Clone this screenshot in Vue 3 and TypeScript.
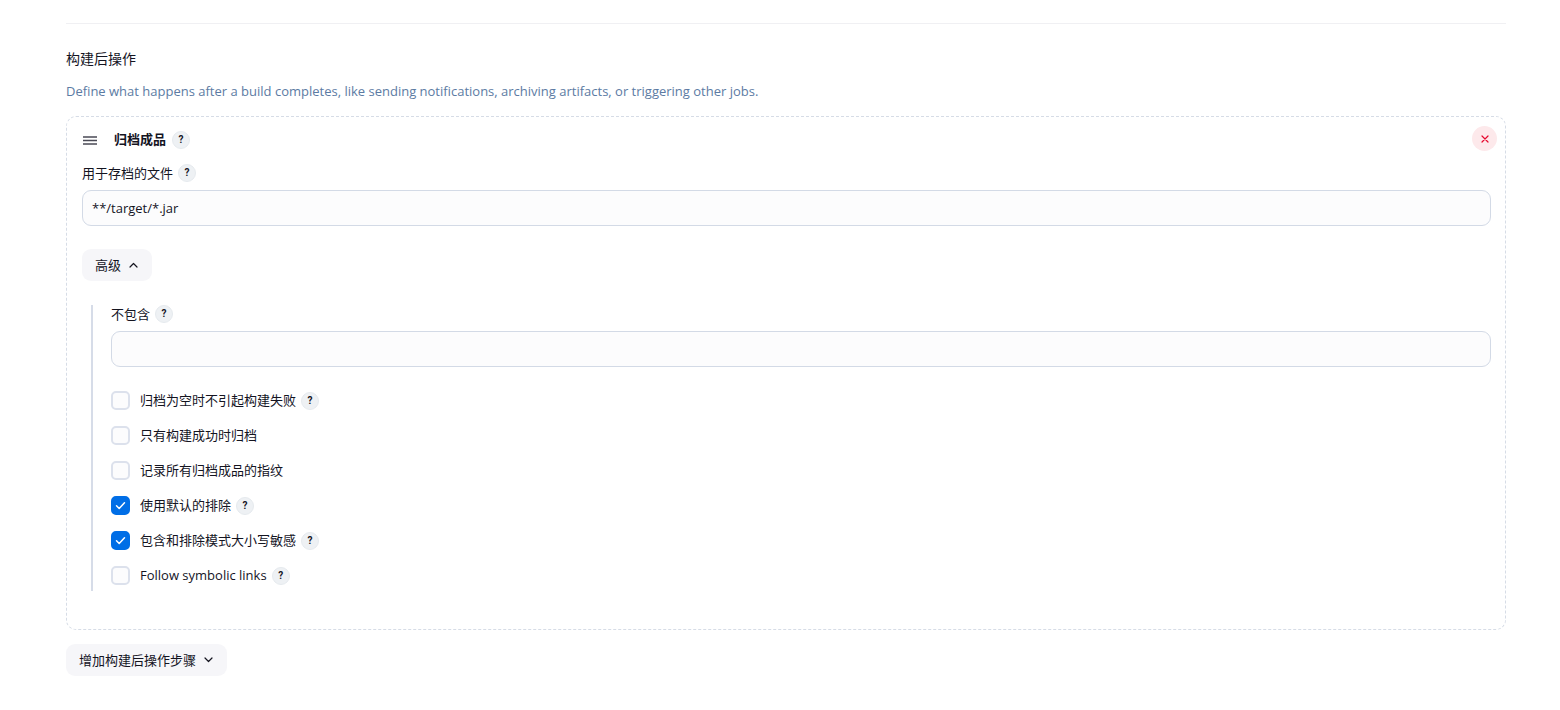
<script setup lang="ts">
import { ref } from 'vue'

interface Option {
  id: string
  label: string
  checked: boolean
  help: boolean
}

const files = ref('**/target/*.jar')
const excludes = ref('')
const expanded = ref(true)
const options = ref<Option[]>([
  { id: 'allow-empty', label: '归档为空时不引起构建失败', checked: false, help: true },
  { id: 'only-success', label: '只有构建成功时归档', checked: false, help: false },
  { id: 'fingerprint', label: '记录所有归档成品的指纹', checked: false, help: false },
  { id: 'default-excludes', label: '使用默认的排除', checked: true, help: true },
  { id: 'case-sensitive', label: '包含和排除模式大小写敏感', checked: true, help: true },
  { id: 'symlinks', label: 'Follow symbolic links', checked: false, help: true },
])
</script>

<template>
  <main class="page">
    <hr class="divider" />
    <h2 class="heading">构建后操作</h2>
    <p class="description">
      Define what happens after a build completes, like sending notifications, archiving artifacts, or triggering other jobs.
    </p>

    <section class="card">
      <header class="card-header">
        <svg class="handle" viewBox="0 0 14 9" aria-hidden="true">
          <path d="M0 1h14M0 4.5h14M0 8h14" fill="none" stroke="currentColor" stroke-width="1.4" />
        </svg>
        <h3 class="card-title">归档成品</h3>
        <button type="button" class="help">?</button>
        <button type="button" class="remove">
          <svg viewBox="0 0 8 8" aria-hidden="true">
            <path d="M1 1l6 6M7 1l-6 6" fill="none" stroke="currentColor" stroke-width="1.2" stroke-linecap="round" />
          </svg>
        </button>
      </header>

      <div class="field-label">
        <label for="files">用于存档的文件</label>
        <button type="button" class="help">?</button>
      </div>
      <input id="files" v-model="files" class="text-input" type="text" />

      <button type="button" class="button advanced" @click="expanded = !expanded">
        高级
        <svg class="chevron" viewBox="0 0 9 6" aria-hidden="true">
          <path d="M1 5l3.500-3.500L8 5" fill="none" stroke="currentColor" stroke-width="1.2" stroke-linecap="round" stroke-linejoin="round" />
        </svg>
      </button>

      <div v-if="expanded" class="nested">
        <div class="field-label">
          <label for="excludes">不包含</label>
          <button type="button" class="help">?</button>
        </div>
        <input id="excludes" v-model="excludes" class="text-input" type="text" />

        <div class="options">
          <div v-for="option in options" :key="option.id" class="option">
            <span class="check">
              <input :id="option.id" v-model="option.checked" type="checkbox" />
              <svg v-if="option.checked" viewBox="0 0 19 19" aria-hidden="true">
                <path d="M5.500 9.800l2.700 2.700 5.300-5.800" fill="none" stroke="#fff" stroke-width="1.500" stroke-linecap="round" stroke-linejoin="round" />
              </svg>
            </span>
            <label :for="option.id">{{ option.label }}</label>
            <button v-if="option.help" type="button" class="help">?</button>
          </div>
        </div>
      </div>
    </section>

    <button type="button" class="button">
      增加构建后操作步骤
      <svg class="chevron" viewBox="0 0 9 6" aria-hidden="true">
        <path d="M1 1l3.500 3.500L8 1" fill="none" stroke="currentColor" stroke-width="1.2" stroke-linecap="round" stroke-linejoin="round" />
      </svg>
    </button>
  </main>
</template>

<style>
body {
  background: #fff;
}
</style>

<style scoped>
.page {
  box-sizing: border-box;
  padding: 23px 54px 32px 66px;
  color: #14141f;
  font-family: "Open Sans", "Noto Sans CJK SC", sans-serif;
  font-size: 13px;
  line-height: 20px;
}

.page * {
  box-sizing: border-box;
}

button,
input {
  font: inherit;
  color: inherit;
}

.divider {
  height: 1px;
  margin: 0 0 25px;
  border: 0;
  background: #f0f0f3;
}

.heading {
  margin: 0 0 12px;
  font-size: 14px;
  font-weight: 400;
}

.description {
  margin: 0 0 15px;
  color: #5c7ba3;
}

.card {
  margin-bottom: 14px;
  padding: 9px 14px 38px 15px;
  border: 1px dashed #d6dce6;
  border-radius: 10px;
}

.card-header {
  display: flex;
  align-items: center;
  height: 28px;
  margin-bottom: 10px;
}

.handle {
  width: 14px;
  height: 9px;
  margin: 0 17px 0 1px;
  color: #4a4a55;
}

.card-title {
  margin: 0;
  padding-bottom: 2px;
  font-size: 13px;
  font-weight: 700;
}

.help {
  width: 18px;
  height: 18px;
  margin-left: 5px;
  padding: 0;
  border: 1px solid #e6eaee;
  border-radius: 50%;
  background: #eef1f4;
  font-family: Roboto, sans-serif;
  font-size: 10px;
  font-weight: 700;
  line-height: 16px;
  text-align: center;
}

.card-header .help {
  margin-left: 6px;
}

.remove {
  display: flex;
  align-self: flex-start;
  align-items: center;
  justify-content: center;
  width: 25px;
  height: 25px;
  margin: 0 -6px 0 auto;
  padding: 0;
  border: 0;
  border-radius: 50%;
  background: #fde9eb;
  color: #e6092f;
}

.remove svg {
  width: 8px;
  height: 8px;
}

.field-label {
  display: flex;
  align-items: center;
  height: 18px;
  margin-bottom: 8px;
}

.text-input {
  display: block;
  width: 100%;
  height: 36px;
  padding: 0 9px;
  border: 1px solid #d3dae6;
  border-radius: 9px;
  outline: 0;
  background: #fcfcfd;
}

.button {
  display: flex;
  align-items: center;
  gap: 8px;
  height: 32px;
  padding: 0 14px 0 13px;
  border: 0;
  border-radius: 9px;
  background: #f6f6f9;
}

.chevron {
  width: 9px;
  height: 6px;
}

.advanced {
  margin: 23px 0 24px;
}

.nested {
  margin-left: 9px;
  padding-left: 18px;
  border-left: 2px solid #d6dce8;
}

.options {
  display: grid;
  gap: 16px;
  margin-top: 24px;
  padding-bottom: 6px;
}

.option {
  display: flex;
  align-items: center;
  height: 19px;
}

.option label {
  padding-bottom: 2px;
}

.check {
  display: grid;
  width: 19px;
  height: 19px;
  margin-right: 10px;
}

.check input,
.check svg {
  grid-area: 1 / 1;
  width: 19px;
  height: 19px;
  margin: 0;
}

.check input {
  appearance: none;
  border: 2px solid #dce1ec;
  border-radius: 5px;
  background: #fcfcfd;
}

.check input:checked {
  border-color: #006ee6;
  background: #006ee6;
}

.check svg {
  pointer-events: none;
}
</style>
